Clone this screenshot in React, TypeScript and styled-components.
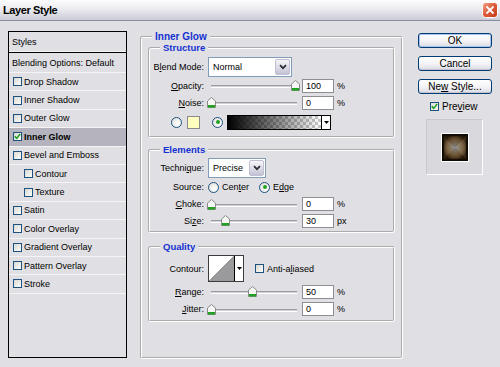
import React from "react";
import styled, { createGlobalStyle } from "styled-components";

const font = `"Liberation Sans", Arial, sans-serif`;
const face = "#e0dfe3";

const Global = createGlobalStyle`
  * { box-sizing: border-box; }
  html, body { margin: 0; padding: 0; }
  body { background: ${face}; font-family: ${font}; font-size: 9px; color: #000; }
`;

const Dialog = styled.div`
  width: 500px;
  height: 367px;
  overflow: hidden;
  background: ${face};
`;

const TitleBar = styled.div`
  height: 21px;
  display: flex;
  align-items: center;
  justify-content: space-between;
  padding: 0 2px 0 3px;
  background: linear-gradient(#fdfdfe, #ebebf0 45%, #cbcbd6);
  border-bottom: 1px solid #878ba4;
`;

const Title = styled.span`
  font-size: 11px;
  font-weight: bold;
  letter-spacing: -0.4px;
`;

const Body = styled.div`
  display: flex;
  align-items: flex-start;
  padding: 10px 0 0 8px;
`;

/* ---------- left style list ---------- */

const StyleList = styled.div`
  width: 119px;
  height: 327px;
  border: 1px solid #000;
  flex: none;
`;

const ListHeader = styled.div<{ $tall?: boolean }>`
  height: ${p => (p.$tall ? 20 : 21)}px;
  display: flex;
  align-items: center;
  padding-left: 3px;
  border-bottom: 1px solid ${p => (p.$tall ? "#f4f4f7" : "#000")};
  box-shadow: ${p => (p.$tall ? "none" : "inset 0 -1px 0 #f4f4f7")};
  white-space: nowrap;
`;

const ListRow = styled.div<{ $indent?: boolean; $selected?: boolean }>`
  height: 18.4px;
  display: flex;
  align-items: center;
  gap: 2px;
  padding-left: ${p => (p.$indent ? 15 : 4)}px;
  border-bottom: 1px solid #f4f4f7;
  background: ${p => (p.$selected ? "#b5b4be" : "transparent")};
  font-weight: ${p => (p.$selected ? "bold" : "normal")};
  white-space: nowrap;
`;

const Box = styled.span`
  width: 9px;
  height: 9px;
  flex: none;
  display: inline-flex;
  align-items: center;
  justify-content: center;
  border: 1px solid #1c5180;
  background: linear-gradient(135deg, #d9d9d3, #fbfbfa);
`;

const Check = ({ on }: { on?: boolean }) => (
  <Box>
    {on && (
      <svg width="7" height="7" viewBox="0 0 7 7">
        <path d="M0.8 3.4 L2.7 5.4 L6.2 1" fill="none" stroke="#21a121" strokeWidth="1.6" />
      </svg>
    )}
  </Box>
);

/* ---------- group boxes ---------- */

const Group = styled.fieldset<{ $mt?: number }>`
  margin: ${p => p.$mt ?? 0}px 0 0;
  padding: 0;
  min-width: 0;
  border: 2px groove #fff;
  border-radius: 3px;
`;

const MainGroup = styled(Group)`
  width: 263px;
  height: 327px;
  margin: 1px 0 0 13px;
  padding: 0 6px;
  flex: none;
`;

const Legend = styled.legend<{ $outer?: boolean }>`
  padding: 0 3px;
  margin-left: ${p => (p.$outer ? 4 : 10)}px;
  line-height: ${p => (p.$outer ? 10 : 12)}px;
  font-size: ${p => (p.$outer ? 10 : 9.5)}px;
  font-weight: bold;
  color: #1432d2;
`;

const Rows = styled.div<{ $pb: number }>`
  padding-bottom: ${p => p.$pb}px;
`;

const Row = styled.div<{ $h: number; $mt?: number; $pl?: number }>`
  display: flex;
  align-items: center;
  height: ${p => p.$h}px;
  margin-top: ${p => p.$mt ?? 0}px;
  padding-left: ${p => p.$pl ?? 0}px;
  white-space: nowrap;
`;

const Label = styled.span`
  width: 54px;
  margin-right: 4px;
  flex: none;
  text-align: right;
`;

const Key = styled.u`
  text-decoration: underline;
`;

const Unit = styled.span`
  margin-left: 3px;
`;

/* ---------- controls ---------- */

const Select = styled.div<{ $w: number }>`
  width: ${p => p.$w}px;
  height: 20px;
  display: flex;
  align-items: stretch;
  padding: 1px;
  background: #fff;
  border: 1px solid #7f9db9;
  flex: none;
`;

const SelectText = styled.span`
  flex: 1;
  display: flex;
  align-items: center;
  padding-left: 3px;
`;

const DropButton = styled.span`
  width: 15px;
  display: flex;
  align-items: center;
  justify-content: center;
  border: 1px solid #c0bfd2;
  border-radius: 2px;
  background: linear-gradient(#f6f6f9, #d3d2e0 70%, #c2c1d4);
`;

const Chevron = () => (
  <svg width="8" height="6" viewBox="0 0 8 6">
    <path d="M1 1.2 L4 4.2 L7 1.2" fill="none" stroke="#2b2b33" strokeWidth="1.7" />
  </svg>
);

const SliderBox = styled.div`
  position: relative;
  width: 92px;
  height: 11px;
  flex: none;
`;

const Track = styled.div`
  position: absolute;
  left: 3px;
  right: 3px;
  top: 5px;
  height: 3px;
  border-top: 1px solid #9c9ba2;
  border-bottom: 1px solid #fff;
  background: #d2d1d8;
`;

const ThumbWrap = styled.div<{ $pos: number }>`
  position: absolute;
  top: 0;
  left: ${p => p.$pos * 84 - 1.5}px;
  display: flex;
`;

const Slider = ({ pos }: { pos: number }) => (
  <SliderBox>
    <Track />
    <ThumbWrap $pos={pos}>
      <svg width="9" height="11" viewBox="0 0 9 11">
        <path d="M0.5 4 L4.5 0.5 L8.5 4 V10.5 H0.5 Z" fill="#f6f6f4" stroke="#8a8a8a" />
        <rect x="1" y="8" width="7" height="2.5" fill="#21a121" />
      </svg>
    </ThumbWrap>
  </SliderBox>
);

const NumberField = styled.input`
  width: 32px;
  height: 14px;
  margin: 0 0 0 2px;
  padding: 0 0 0 3px;
  border: 1px solid #8d8d94;
  background: #fff;
  font-family: ${font};
  font-size: 9px;
  color: #000;
  flex: none;
`;

const RadioDot = styled.span<{ $on?: boolean }>`
  width: 11px;
  height: 11px;
  flex: none;
  border-radius: 50%;
  border: 1px solid #1c5180;
  background: radial-gradient(circle at 65% 65%, #fff, #dcdcd6);
  display: inline-flex;
  align-items: center;
  justify-content: center;

  &::after {
    content: "";
    width: 4px;
    height: 4px;
    border-radius: 50%;
    background: #21a121;
    display: ${p => (p.$on ? "block" : "none")};
  }
`;

const OptionText = styled.span<{ $mr?: number }>`
  margin-left: 3px;
  margin-right: ${p => p.$mr ?? 0}px;
`;

const Swatch = styled.span`
  width: 13px;
  height: 13px;
  margin: 0 12px 0 5px;
  border: 1px solid #8a8a8a;
  background: #ffffc0;
  flex: none;
`;

const GradientPicker = styled.div`
  width: 104px;
  height: 15px;
  margin-left: 4px;
  display: flex;
  border: 1px solid #000;
  background: #fff;
  flex: none;
`;

const GradientStrip = styled.span`
  flex: 1;
  background:
    linear-gradient(to right, #000, rgba(0, 0, 0, 0)),
    conic-gradient(#c8c8c8 25%, #fff 0 50%, #c8c8c8 0 75%, #fff 0) 0 0 / 6px 6px;
`;

const PickerArrow = styled.span`
  width: 9px;
  display: flex;
  align-items: center;
  justify-content: center;
  border-left: 1px solid #000;
  background: #fff;
`;

const Triangle = () => (
  <svg width="5" height="3" viewBox="0 0 5 3">
    <path d="M0 0 H5 L2.5 3 Z" fill="#000" />
  </svg>
);

const ContourPicker = styled.div`
  width: 36px;
  height: 27px;
  display: flex;
  border: 1px solid #3c3c3c;
  background: #fff;
  flex: none;
`;

const ContourCurve = styled.span`
  flex: 1;
  background: linear-gradient(to top left, #9a9a9c 50%, #fff 50%);
`;

const AntiAlias = styled.span`
  display: flex;
  align-items: center;
  gap: 3px;
  margin-left: 11px;
`;

/* ---------- right column ---------- */

const Side = styled.div`
  width: 74px;
  margin: 2px 0 0 15px;
  display: flex;
  flex-direction: column;
  flex: none;
`;

const Button = styled.button<{ $primary?: boolean }>`
  height: 15px;
  margin: 0 0 8px;
  padding: 0;
  border: 1px solid #003c74;
  border-radius: 3px;
  background: linear-gradient(#ffffff, #f3f3f6 55%, #d9d9e3);
  box-shadow: ${p => (p.$primary ? "inset 0 0 0 1px #a9c3ee" : "inset 0 -1px 0 #c3c3d3")};
  font-family: ${font};
  font-size: 10px;
  line-height: 12px;
  color: #000;
`;

const PreviewToggle = styled.div`
  height: 10px;
  margin: -1px 0 0 12px;
  display: flex;
  align-items: center;
  gap: 3px;
  font-size: 10px;
`;

const PreviewFrame = styled.div`
  width: 57px;
  height: 56px;
  margin: 8px 0 0 8px;
  display: flex;
  align-items: center;
  justify-content: center;
  background: #d9d8dc;
  border: 1px solid;
  border-color: #c9c8cc #fff #fff #c9c8cc;
`;

const PreviewTile = styled.div`
  width: 28px;
  height: 29px;
  border: 1px solid #fff;
  background: #0d0904;
  padding: 1px;
`;

const PreviewGlow = styled.div`
  width: 100%;
  height: 100%;
  background:
    conic-gradient(
      from 45deg,
      rgba(255, 255, 255, 0.07) 0 25%,
      rgba(0, 0, 0, 0.08) 0 50%,
      rgba(255, 255, 255, 0.05) 0 75%,
      rgba(0, 0, 0, 0.1) 0
    ),
    radial-gradient(closest-side, #8a8b93 0%, #84745c 35%, #735a38 65%, #4a341a 90%, #2a1c0b 100%);
  box-shadow: inset 0 0 1px 1px #140d05;
`;

const CloseBox = () => (
  <svg width="16" height="16" viewBox="0 0 16 16">
    <defs>
      <linearGradient id="cl" x1="0" y1="0" x2="1" y2="1">
        <stop offset="0" stopColor="#f0a58b" />
        <stop offset="0.5" stopColor="#dc5a36" />
        <stop offset="1" stopColor="#c2391a" />
      </linearGradient>
    </defs>
    <rect x="0.5" y="0.5" width="15" height="15" rx="3" fill="url(#cl)" stroke="#fff" />
    <path d="M4.5 4.5 L11.5 11.5 M11.5 4.5 L4.5 11.5" stroke="#fff" strokeWidth="1.8" />
  </svg>
);

const effects: { label: string; indent?: boolean; on?: boolean }[] = [
  { label: "Drop Shadow" },
  { label: "Inner Shadow" },
  { label: "Outer Glow" },
  { label: "Inner Glow", on: true },
  { label: "Bevel and Emboss" },
  { label: "Contour", indent: true },
  { label: "Texture", indent: true },
  { label: "Satin" },
  { label: "Color Overlay" },
  { label: "Gradient Overlay" },
  { label: "Pattern Overlay" },
  { label: "Stroke" },
];

export default function App() {
  return (
    <Dialog>
      <Global />
      <TitleBar>
        <Title>Layer Style</Title>
        <CloseBox />
      </TitleBar>
      <Body>
        <StyleList>
          <ListHeader>Styles</ListHeader>
          <ListHeader $tall>Blending Options: Default</ListHeader>
          {effects.map(e => (
            <ListRow key={e.label} $indent={e.indent} $selected={e.on}>
              <Check on={e.on} />
              {e.label}
            </ListRow>
          ))}
        </StyleList>

        <MainGroup>
          <Legend $outer>Inner Glow</Legend>

          <Group>
            <Legend>Structure</Legend>
            <Rows $pb={3}>
              <Row $h={20} $mt={3}>
                <Label>
                  B<Key>l</Key>end Mode:
                </Label>
                <Select $w={84}>
                  <SelectText>Normal</SelectText>
                  <DropButton>
                    <Chevron />
                  </DropButton>
                </Select>
              </Row>
              <Row $h={17}>
                <Label>
                  <Key>O</Key>pacity:
                </Label>
                <Slider pos={1} />
                <NumberField defaultValue="100" />
                <Unit>%</Unit>
              </Row>
              <Row $h={17}>
                <Label>
                  <Key>N</Key>oise:
                </Label>
                <Slider pos={0} />
                <NumberField defaultValue="0" />
                <Unit>%</Unit>
              </Row>
              <Row $h={22} $pl={21}>
                <RadioDot />
                <Swatch />
                <RadioDot $on />
                <GradientPicker>
                  <GradientStrip />
                  <PickerArrow>
                    <Triangle />
                  </PickerArrow>
                </GradientPicker>
              </Row>
            </Rows>
          </Group>

          <Group $mt={6}>
            <Legend>Elements</Legend>
            <Rows $pb={2}>
              <Row $h={20} $mt={2}>
                <Label>
                  Techni<Key>q</Key>ue:
                </Label>
                <Select $w={58}>
                  <SelectText>Precise</SelectText>
                  <DropButton>
                    <Chevron />
                  </DropButton>
                </Select>
              </Row>
              <Row $h={18}>
                <Label>Source:</Label>
                <RadioDot />
                <OptionText $mr={10}>
                  Cen<Key>t</Key>er
                </OptionText>
                <RadioDot $on />
                <OptionText>
                  E<Key>d</Key>ge
                </OptionText>
              </Row>
              <Row $h={16}>
                <Label>
                  <Key>C</Key>hoke:
                </Label>
                <Slider pos={0} />
                <NumberField defaultValue="0" />
                <Unit>%</Unit>
              </Row>
              <Row $h={17}>
                <Label>
                  Si<Key>z</Key>e:
                </Label>
                <Slider pos={0.167} />
                <NumberField defaultValue="30" />
                <Unit>px</Unit>
              </Row>
            </Rows>
          </Group>

          <Group $mt={8}>
            <Legend>Quality</Legend>
            <Rows $pb={3}>
              <Row $h={27} $mt={2}>
                <Label>Contour:</Label>
                <ContourPicker>
                  <ContourCurve />
                  <PickerArrow>
                    <Triangle />
                  </PickerArrow>
                </ContourPicker>
                <AntiAlias>
                  <Check />
                  <span>
                    Anti-a<Key>l</Key>iased
                  </span>
                </AntiAlias>
              </Row>
              <Row $h={19}>
                <Label>
                  <Key>R</Key>ange:
                </Label>
                <Slider pos={0.49} />
                <NumberField defaultValue="50" />
                <Unit>%</Unit>
              </Row>
              <Row $h={16}>
                <Label>
                  <Key>J</Key>itter:
                </Label>
                <Slider pos={0} />
                <NumberField defaultValue="0" />
                <Unit>%</Unit>
              </Row>
            </Rows>
          </Group>
        </MainGroup>

        <Side>
          <Button $primary>OK</Button>
          <Button>Cancel</Button>
          <Button>
            Ne<Key>w</Key> Style...
          </Button>
          <PreviewToggle>
            <Check on />
            <span>
              Pre<Key>v</Key>iew
            </span>
          </PreviewToggle>
          <PreviewFrame>
            <PreviewTile>
              <PreviewGlow />
            </PreviewTile>
          </PreviewFrame>
        </Side>
      </Body>
    </Dialog>
  );
}
